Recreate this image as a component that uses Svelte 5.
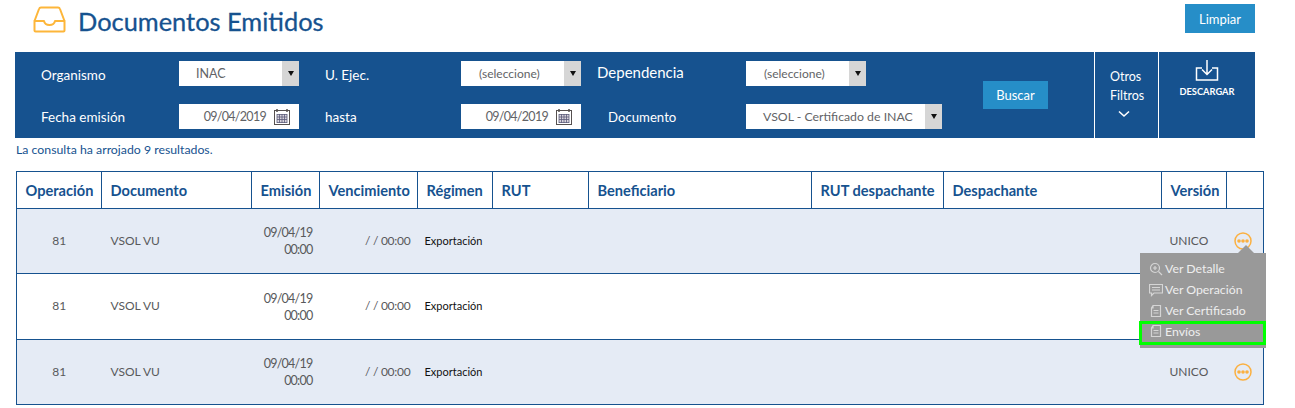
<script>
  const cols = [85, 150, 68, 98, 75, 96, 223, 132, 218, 65, 37];
  const heads = ['Operación','Documento','Emisión','Vencimiento','Régimen','RUT','Beneficiario','RUT despachante','Despachante','Versión',''];
  const rows = [
    { tint: true, h: 65, dots: true },
    { tint: false, h: 66, dots: false },
    { tint: true, h: 65, dots: true }
  ];
</script>

{#snippet calendar()}
  <svg class="cal" width="16" height="17" viewBox="0 0 16 17" fill="none">
    <rect x="0.5" y="2.5" width="15" height="14" fill="#fff" stroke="#55504f"/>
    <path d="M3 1v3M13 1v3" stroke="#55504f" stroke-width="1.5"/>
    <path d="M3 6.5h10v8H3z" fill="#d9d4dc"/>
    <path d="M3 6.5h10M3 9h10M3 11.5h10M3 14.5h10M3 6v9M5.5 6v9M8 6v9M10.5 6v9M13 6v9" stroke="#5b5b78" stroke-width="0.8"/>
  </svg>
{/snippet}

{#snippet arrow()}
  <span class="arrow"><i></i></span>
{/snippet}

{#snippet docIcon()}
  <svg class="mi" width="14" height="14" viewBox="0 0 14 14" fill="none" stroke="#d5d5d5" stroke-width="1.2">
    <path d="M4 1.5h7.5v11h-9V4zM4 1.5V4H2.5M4.5 6.5h5M4.5 9h5"/>
  </svg>
{/snippet}

<div class="page">
  <header class="top">
    <div class="title">
      <svg width="33" height="27" viewBox="0 0 33 27" fill="none" stroke="#fdb63a" stroke-width="2" stroke-linejoin="round">
        <path d="M1.500 15 6 3q.5-1.500 2-1.500h17q1.500 0 2 1.500l4.500 12"/>
        <path d="M1.500 15v9.500a1 1 0 0 0 1 1h28a1 1 0 0 0 1-1V15H22c-.5 2.500-2 4-5.500 4S11.500 17.500 11 15z"/>
      </svg>
      <h1>Documentos Emitidos</h1>
    </div>
    <button class="btn limpiar">Limpiar</button>
  </header>

  <section class="bar">
    <div class="fields">
      <label class="lb first" for="a">Organismo</label>
      <div class="sel" id="a"><span class="v1">INAC</span>{@render arrow()}</div>
      <label class="lb first" for="b">U. Ejec.</label>
      <div class="sel" id="b"><span>(seleccione)</span>{@render arrow()}</div>
      <label class="lb big" for="c">Dependencia</label>
      <div class="sel" id="c"><span>(seleccione)</span>{@render arrow()}</div>

      <label class="lb" for="d">Fecha emisión</label>
      <div class="date" id="d"><span>09/04/2019</span>{@render calendar()}</div>
      <label class="lb" for="e">hasta</label>
      <div class="date" id="e"><span>09/04/2019</span>{@render calendar()}</div>
      <label class="lb ind" for="f">Documento</label>
      <div class="sel wide" id="f"><span class="v2">VSOL - Certificado de INAC</span>{@render arrow()}</div>
    </div>
    <button class="btn buscar">Buscar</button>
    <div class="otros">
      <span>Otros</span>
      <span>Filtros</span>
      <svg width="12" height="8" viewBox="0 0 12 8" fill="none" stroke="#fff" stroke-width="1.6"><path d="M1 1.500 6 6l5-4.500"/></svg>
    </div>
    <div class="descargar">
      <svg width="24" height="21" viewBox="0 0 24 21" fill="none" stroke="#fff" stroke-width="1.500">
        <path d="M7 8H1.500v12h21V8H17"/>
        <path d="M12 0v14M7 9.500l5 5 5-5"/>
      </svg>
      <span>DESCARGAR</span>
    </div>
  </section>

  <p class="result">La consulta ha arrojado 9 resultados.</p>

  <div class="wrap">
    <table>
      <colgroup>
        {#each cols as c}<col style="width:{c}px" />{/each}
      </colgroup>
      <thead>
        <tr>{#each heads as h}<th>{h}</th>{/each}</tr>
      </thead>
      <tbody>
        {#each rows as r}
          <tr class:tint={r.tint} style="height:{r.h}px">
            <td class="c">81</td>
            <td class="doc">VSOL VU</td>
            <td class="r dt">09/04/19<br />00:00</td>
            <td class="r venc">/ / 00:00</td>
            <td class="reg">Exportación</td>
            <td></td>
            <td></td>
            <td></td>
            <td></td>
            <td class="ver">{r.dots ? 'UNICO' : ''}</td>
            <td class="act">
              {#if r.dots}
                <svg width="18" height="18" viewBox="0 0 18 18">
                  <circle cx="9" cy="9" r="8" fill="none" stroke="#fbb040" stroke-width="1.500"/>
                  <circle cx="5" cy="9" r="1.800" fill="#fbb040"/>
                  <circle cx="9" cy="9" r="1.800" fill="#fbb040"/>
                  <circle cx="13" cy="9" r="1.800" fill="#fbb040"/>
                </svg>
              {/if}
            </td>
          </tr>
        {/each}
      </tbody>
    </table>

    <div class="menu">
      <div class="item">
        <svg class="mi" width="14" height="14" viewBox="0 0 14 14" fill="none" stroke="#d5d5d5" stroke-width="1.200">
          <circle cx="6" cy="6" r="4.500"/><path d="M9.500 9.500 13 13M4 6h4M6 4v4"/>
        </svg>
        Ver Detalle
      </div>
      <div class="item">
        <svg class="mi" width="14" height="14" viewBox="0 0 14 14" fill="none" stroke="#d5d5d5" stroke-width="1.200">
          <path d="M.5 1.500h13v8.500H5l-2.500 2.500V10H.5zM3 4.500h8M3 7h8"/>
        </svg>
        Ver Operación
      </div>
      <div class="item">{@render docIcon()}Ver Certificado</div>
      <div class="item hl">{@render docIcon()}Envíos</div>
    </div>
  </div>
</div>

<style>
  :global(body) { margin: 0; background: #fff; overflow: hidden; }
  .page {
    width: 1295px;
    height: 408px;
    overflow: hidden;
    font-family: Lato, "Open Sans", sans-serif;
    color: #58595b;
  }
  .top {
    display: flex;
    justify-content: space-between;
    padding: 4px 40px 0 33px;
    height: 52px;
    box-sizing: border-box;
  }
  .title { display: flex; align-items: flex-start; gap: 12px; }
  .title svg { margin-top: 2px; }
  h1 {
    margin: 0;
    font-size: 25.400px;
    line-height: 34px;
    font-weight: 400;
    -webkit-text-stroke: 0.3px #16528f;
    color: #16528f;
  }
  .btn {
    border: 0;
    background: #268ec8;
    color: #fff;
    font: 13px Lato, sans-serif;
    padding: 0;
  }
  .limpiar { width: 70px; height: 29px; }
  .bar {
    margin: 0 40px 0 15px;
    height: 86px;
    background: #16528f;
    display: flex;
    color: #fff;
    position: relative;
  }
  .fields {
    display: grid;
    grid-template-columns: 138px 146px 136px 136px 149px 120px;
    grid-template-rows: 25px 25px;
    row-gap: 18px;
    padding: 9px 0 0 26px;
    width: 968px;
    box-sizing: border-box;
    align-items: center;
  }
  .lb { font-size: 13.500px; color: #fff; }
  .lb.first { padding-top: 2px; }
  .lb.big { font-size: 15px; margin-top: -3px; }
  .lb.ind { padding-left: 11px; font-size: 13.200px; }
  .sel, .date {
    width: 120px;
    height: 25px;
    background: #fff;
    display: flex;
    align-items: center;
    font-size: 13px;
    color: #626366;
    box-sizing: border-box;
    position: relative;
  }
  .sel span:first-child { padding-left: 18px; font-size: 12px; }
  .sel span.v1 { font-size: 12.500px; padding-left: 17px; }
  .sel span.v2 { font-size: 12.300px; padding-left: 17px; white-space: nowrap; }
  .sel.wide { width: 196px; }
  .arrow {
    position: absolute;
    right: 0;
    top: 0;
    bottom: 0;
    width: 17px;
    background: #d6d6d6;
    display: flex;
    align-items: center;
    justify-content: center;
  }
  .arrow i {
    width: 0;
    height: 0;
    border: 3px solid transparent;
    border-top: 5px solid #111;
    border-bottom: 0;
  }
  .date { justify-content: flex-end; padding-right: 9px; gap: 8px; font-size: 12.500px; letter-spacing: -0.7px; }
  .cal { flex: none; }
  .buscar {
    width: 65px;
    height: 28px;
    margin: 29px 0 0 0;
  }
  .otros {
    position: absolute;
    left: 1079px;
    top: 0;
    bottom: 0;
    width: 65px;
    border-left: 1px solid #fff;
    border-right: 1px solid #fff;
    display: flex;
    flex-direction: column;
    align-items: flex-start;
    padding: 16px 0 0 15px;
    box-sizing: border-box;
    font-size: 12.500px;
    line-height: 18.500px;
  }
  .otros svg { margin: 5px 0 0 8px; }
  .descargar {
    position: absolute;
    left: 1144px;
    top: 0;
    bottom: 0;
    width: 96px;
    display: flex;
    flex-direction: column;
    align-items: center;
    padding-top: 8px;
    box-sizing: border-box;
    font-size: 9.300px;
    font-weight: 700;
    gap: 5px;
  }
  .result {
    margin: 0;
    height: 33px;
    padding: 5px 0 0 16px;
    box-sizing: border-box;
    font-size: 12.300px;
    line-height: 14px;
    color: #16528f;
  }
  .wrap { position: relative; margin-left: 16px; width: 1248px; }
  table {
    border-collapse: collapse;
    table-layout: fixed;
    width: 1247px;
  }
  th, td { padding: 0; border: 1px solid #16528f; }
  thead tr { height: 37px; }
  th {
    color: #16528f;
    font-size: 14.600px;
    font-weight: 700;
    text-align: left;
    padding-left: 8.500px;
    white-space: nowrap;
    box-sizing: border-box;
  }
  td {
    border-left: 0;
    border-right: 0;
    font-size: 12px;
    line-height: 17px;
    color: #58595b;
    padding-bottom: 2px;
  }
  td:first-child { border-left: 1px solid #16528f; }
  td:last-child { border-right: 1px solid #16528f; }
  tr.tint td { background: #e5ebf5; }
  .c { text-align: center; }
  .doc { padding-left: 9px; }
  .r { text-align: right; padding-right: 7px; }
  .dt { letter-spacing: -0.75px; font-size: 12.500px; padding-bottom: 0; }
  .venc { letter-spacing: -0.25px; }
  .reg { color: #111; font-size: 11px; padding-left: 7px; }
  .ver { padding-left: 8px; }
  .act { padding-left: 7px; padding-bottom: 0; }
  .act svg { display: block; }
  .menu {
    position: absolute;
    left: 1124px;
    top: 82px;
    width: 126px;
    height: 95px;
    background: #999;
    color: #eee;
    font-size: 12.300px;
    box-sizing: border-box;
    padding-top: 5px;
  }
  .menu::before {
    content: '';
    position: absolute;
    left: 98px;
    top: -8px;
    border: 8px solid transparent;
    border-top: 0;
    border-bottom-color: #999;
  }
  .item {
    display: flex;
    align-items: center;
    gap: 2px;
    height: 21px;
    padding-left: 9px;
  }
  .mi { flex: none; }
  .hl {
    outline: 3px solid #0f0;
    outline-offset: -3px;
    height: 24px;
    box-sizing: border-box;
    margin: 0 0 0 -1px;
    padding: 0 0 4px 10px;
  }
</style>
